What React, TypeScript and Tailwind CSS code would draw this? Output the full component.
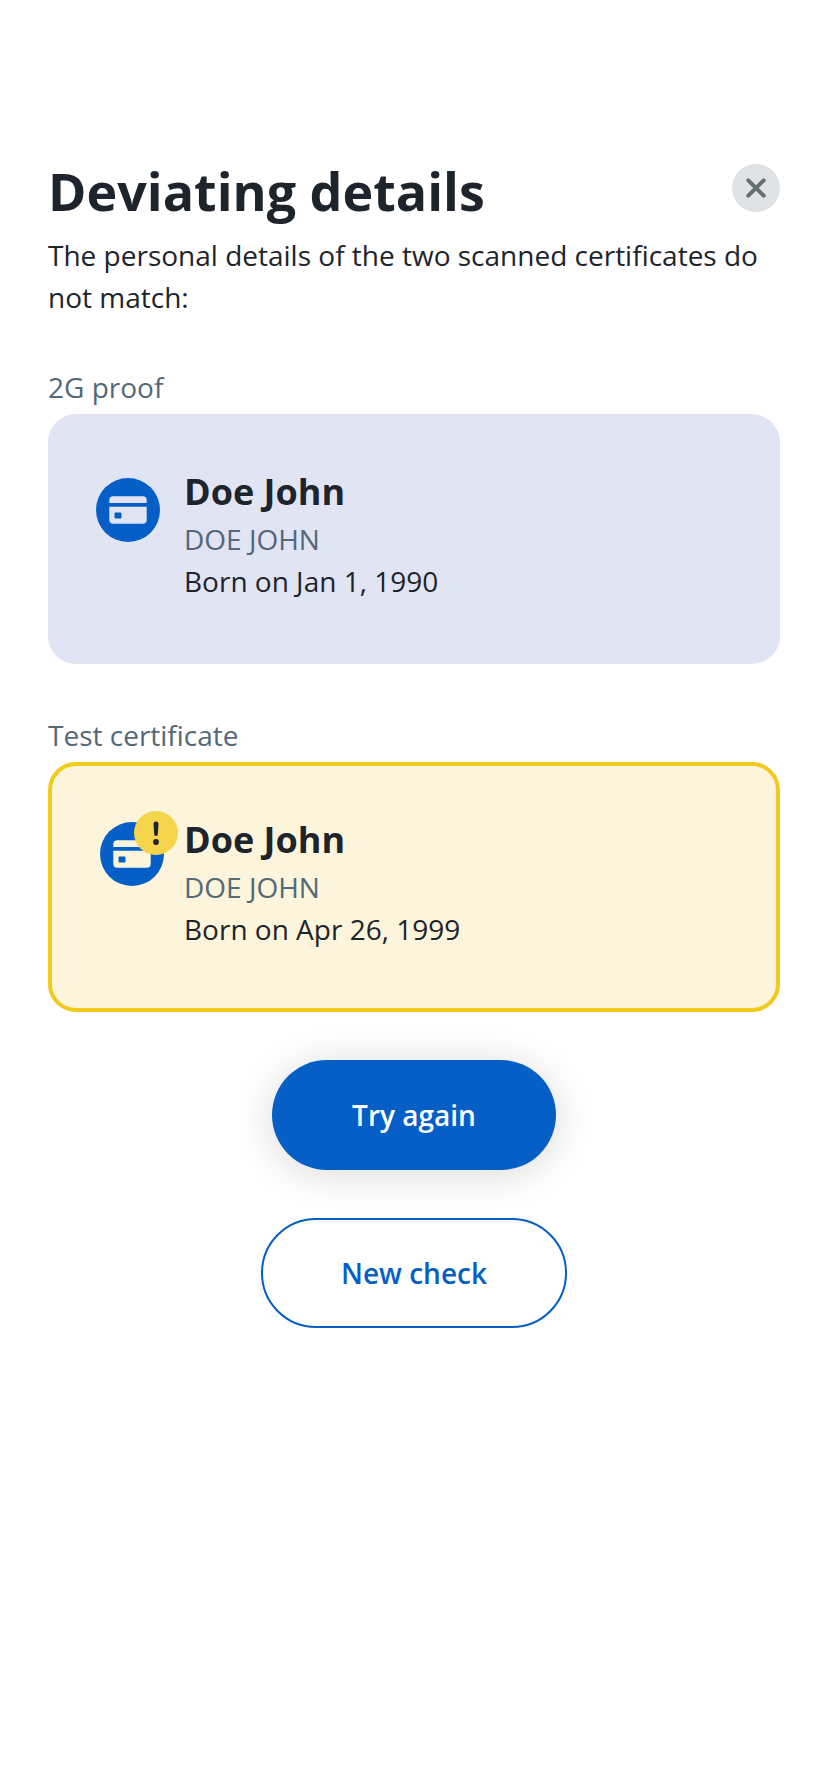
import React from "react";

function CardIcon({ fg }: { fg: string }) {
  return (
    <svg viewBox="0 0 64 64" className="h-16 w-16">
      <circle cx="32" cy="32" r="32" fill="#055FC6" />
      <path d="M13.300 25v-2.700a4 4 0 0 1 4-4h29.400a4 4 0 0 1 4 4V25z" fill={fg} />
      <path fillRule="evenodd" d="M13.300 28.700h37.400v13a4 4 0 0 1-4 4H17.300a4 4 0 0 1-4-4zM19.500 34.400h5a1 1 0 0 1 1 1v4.200a1 1 0 0 1-1 1h-5a1 1 0 0 1-1-1v-4.200a1 1 0 0 1 1-1z" fill={fg} />
    </svg>
  );
}

function Person({ birth }: { birth: string }) {
  return (
    <div className="text-[28px] leading-[42px] text-[#1D242B]">
      <h2 className="mb-0.5 text-[36px] leading-[48px] font-bold">Doe John</h2>
      <p className="text-[#536878]">DOE JOHN</p>
      <p>{birth}</p>
    </div>
  );
}

export default function App() {
  return (
    <main className="min-h-[1792px] bg-white px-12 pt-[164px] font-['Open_Sans',sans-serif] text-[28px] leading-[42px] text-[#1D242B]">
      <header className="flex h-[70px] items-start justify-between">
        <h1 className="text-[52px] leading-[54px] font-bold">Deviating details</h1>
        <button aria-label="Close" className="flex h-12 w-12 items-center justify-center rounded-full bg-[#DFE3E6]">
          <svg viewBox="0 0 24 24" className="h-6 w-6" stroke="#656E6E" strokeWidth="4" strokeLinecap="round"><path d="M4.300 4.300l15.400 15.400M19.700 4.300L4.300 19.700" /></svg>
        </button>
      </header>
      <p>The personal details of the two scanned certificates do not match:</p>
      <p className="mt-12 text-[#536878]">2G proof</p>
      <section className="mt-1.5 flex h-[250px] gap-6 rounded-[28px] bg-[#E1E4F3] px-12 pt-[54px]">
        <div className="mt-[10px]"><CardIcon fg="#E1E4F3" /></div>
        <Person birth="Born on Jan 1, 1990" />
      </section>
      <p className="mt-[50px] text-[#536878]">Test certificate</p>
      <section className="mt-1.5 flex h-[250px] gap-5 rounded-[28px] border-4 border-[#F2CA1D] bg-[#FDF5DB] px-12 pt-[50px]">
        <div className="relative mt-1.5 h-16 w-16">
          <CardIcon fg="#FDF5DB" />
          <svg viewBox="0 0 44 44" className="absolute -top-[11.500px] left-[34px] h-11 w-11">
            <circle cx="22" cy="22" r="22" fill="#F3D44A" />
            <path d="M19.500 13a2.500 2.500 0 0 1 5 0l-.7 10.300a1.800 1.800 0 0 1-3.600 0z" fill="#1D242B" />
            <circle cx="22" cy="31" r="2.900" fill="#1D242B" />
          </svg>
        </div>
        <Person birth="Born on Apr 26, 1999" />
      </section>
      <div className="mt-12 flex flex-col items-center gap-12 font-semibold">
        <button className="h-[110px] w-[284px] rounded-full bg-[#055FC6] text-white shadow-[0_4px_40px_rgba(0,0,0,0.15)]">Try again</button>
        <button className="h-[110px] w-[306px] rounded-full border-2 border-[#055FC6] text-[#055FC6]">New check</button>
      </div>
    </main>
  );
}
